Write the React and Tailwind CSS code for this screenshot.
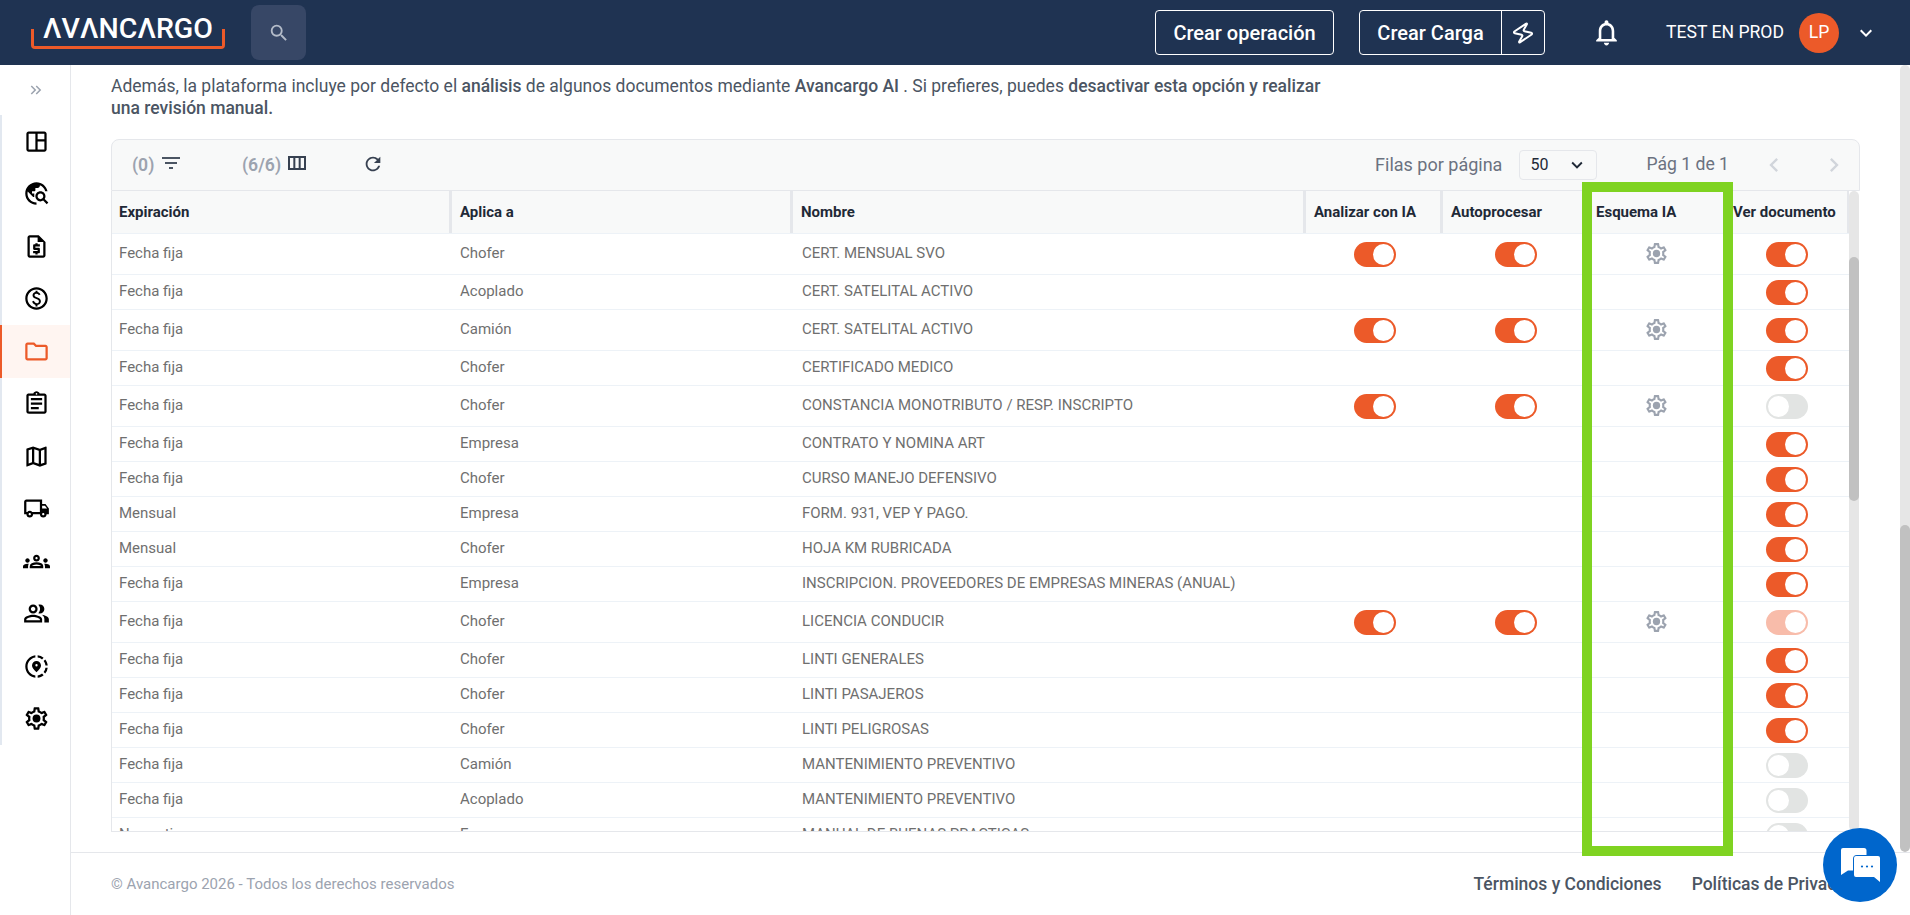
import {
  MdSearch,
  MdKeyboardArrowDown,
  MdOutlineNotifications,
  MdKeyboardDoubleArrowRight,
  MdOutlineSpaceDashboard,
  MdTravelExplore,
  MdOutlineRequestQuote,
  MdOutlinePaid,
  MdOutlineFolder,
  MdOutlineAssignment,
  MdOutlineMap,
  MdOutlineLocalShipping,
  MdOutlineGroups,
  MdOutlinePeopleAlt,
  MdOutlineShareLocation,
  MdFilterList,
  MdOutlineViewColumn,
  MdRefresh,
  MdChevronLeft,
  MdChevronRight,
} from "react-icons/md";
import { Zap } from "lucide-react";

const GEAR =
  "M19.43 12.98c.04-.32.07-.64.07-.98 0-.34-.03-.66-.07-.98l2.11-1.65c.19-.15.24-.42.12-.64l-2-3.46c-.09-.16-.26-.25-.44-.25-.06 0-.12.01-.17.03l-2.49 1c-.52-.4-1.08-.73-1.69-.98l-.38-2.65C14.46 2.18 14.25 2 14 2h-4c-.25 0-.46.18-.49.42l-.38 2.65c-.61.25-1.17.59-1.69.98l-2.49-1c-.06-.02-.12-.03-.18-.03-.17 0-.34.09-.43.25l-2 3.46c-.13.22-.07.49.12.64l2.11 1.65c-.04.32-.07.65-.07.98 0 .33.03.66.07.98l-2.11 1.65c-.19.15-.24.42-.12.64l2 3.46c.09.16.26.25.44.25.06 0 .12-.01.17-.03l2.49-1c.52.4 1.08.73 1.69.98l.38 2.65c.03.24.24.42.49.42h4c.25 0 .46-.18.49-.42l.38-2.65c.61-.25 1.17-.59 1.69-.98l2.49 1c.06.02.12.03.18.03.17 0 .34-.09.43-.25l2-3.46c.12-.22.07-.49-.12-.64l-2.11-1.65zm-1.98-1.71c.04.31.05.52.05.73 0 .21-.02.43-.05.73l-.14 1.13.89.7 1.08.84-.7 1.21-1.27-.51-1.04-.42-.9.68c-.43.32-.84.56-1.25.73l-1.06.43-.16 1.13-.2 1.35h-1.4l-.19-1.35-.16-1.13-1.06-.43c-.43-.18-.83-.41-1.23-.71l-.91-.7-1.06.43-1.27.51-.7-1.21 1.08-.84.89-.7-.14-1.13c-.03-.31-.05-.54-.05-.74s.02-.43.05-.73l.14-1.13-.89-.7-1.08-.84.7-1.21 1.27.51 1.04.42.9-.68c.43-.32.84-.56 1.25-.73l1.06-.43.16-1.13.2-1.35h1.39l.19 1.35.16 1.13 1.06.43c.43.18.83.41 1.23.71l.91.7 1.06-.43 1.27-.51.7 1.21-1.07.85-.89.7.14 1.13z";

function Gear({ size, className }) {
  return (
    <svg width={size} height={size} viewBox="0 0 24 24" fill="currentColor" className={className}>
      <path d={GEAR} />
      <circle cx="12" cy="12" r="3.5" />
    </svg>
  );
}

const navItems = [
  MdOutlineSpaceDashboard,
  MdTravelExplore,
  MdOutlineRequestQuote,
  MdOutlinePaid,
  MdOutlineFolder,
  MdOutlineAssignment,
  MdOutlineMap,
  MdOutlineLocalShipping,
  MdOutlineGroups,
  MdOutlinePeopleAlt,
  MdOutlineShareLocation,
];

// ai: fila con toggles de IA y engranaje; ver: on / off / dim
const rows = [
  { exp: "Fecha fija", to: "Chofer", name: "CERT. MENSUAL SVO", ai: true, ver: "on" },
  { exp: "Fecha fija", to: "Acoplado", name: "CERT. SATELITAL ACTIVO", ver: "on" },
  { exp: "Fecha fija", to: "Camión", name: "CERT. SATELITAL ACTIVO", ai: true, ver: "on" },
  { exp: "Fecha fija", to: "Chofer", name: "CERTIFICADO MEDICO", ver: "on" },
  { exp: "Fecha fija", to: "Chofer", name: "CONSTANCIA MONOTRIBUTO / RESP. INSCRIPTO", ai: true, ver: "off" },
  { exp: "Fecha fija", to: "Empresa", name: "CONTRATO Y NOMINA ART", ver: "on" },
  { exp: "Fecha fija", to: "Chofer", name: "CURSO MANEJO DEFENSIVO", ver: "on" },
  { exp: "Mensual", to: "Empresa", name: "FORM. 931, VEP Y PAGO.", ver: "on" },
  { exp: "Mensual", to: "Chofer", name: "HOJA KM RUBRICADA", ver: "on" },
  { exp: "Fecha fija", to: "Empresa", name: "INSCRIPCION. PROVEEDORES DE EMPRESAS MINERAS (ANUAL)", ver: "on" },
  { exp: "Fecha fija", to: "Chofer", name: "LICENCIA CONDUCIR", ai: true, ver: "dim" },
  { exp: "Fecha fija", to: "Chofer", name: "LINTI GENERALES", ver: "on" },
  { exp: "Fecha fija", to: "Chofer", name: "LINTI PASAJEROS", ver: "on" },
  { exp: "Fecha fija", to: "Chofer", name: "LINTI PELIGROSAS", ver: "on" },
  { exp: "Fecha fija", to: "Camión", name: "MANTENIMIENTO PREVENTIVO", ver: "off" },
  { exp: "Fecha fija", to: "Acoplado", name: "MANTENIMIENTO PREVENTIVO", ver: "off" },
  { exp: "Normativo", to: "Empresa", name: "MANUAL DE BUENAS PRACTICAS", ver: "off" },
];

const headers = ["Expiración", "Aplica a", "Nombre", "Analizar con IA", "Autoprocesar", "Esquema IA", "Ver documento"];
const gridCols = "grid grid-cols-[340px_341px_513px_137px_146px_137px_124px]";

function Toggle({ state = "on" }) {
  if (state === "off") {
    return (
      <span className="flex h-[25px] w-[42px] items-center justify-start rounded-full bg-[#e2e4e3] pl-[2px]">
        <span className="h-[21px] w-[21px] rounded-full bg-white" />
      </span>
    );
  }
  return (
    <span
      className={
        state === "dim"
          ? "flex h-[25px] w-[42px] items-center justify-end rounded-full bg-[#f8bcaa] pr-[2px]"
          : "flex h-[25px] w-[42px] items-center justify-end rounded-full bg-[#ec5a29] pr-[2px]"
      }
    >
      <span className="h-[21px] w-[21px] rounded-full bg-white" />
    </span>
  );
}

function Scrollbar({ className, top, thumb }) {
  return (
    <div className={`${className} flex flex-col overflow-hidden rounded-full bg-[#e6e6e6]`}>
      <div className={top} />
      <div className={thumb} />
    </div>
  );
}

function TopBar() {
  return (
    <header className="flex h-[65px] shrink-0 items-center bg-[#1f3352] text-white">
      <div className="ml-[31px] mt-[29px] flex h-[20px] w-[194px] items-center justify-center self-start rounded-b-[4px] border-x-[3px] border-b-[3px] border-[#ec5a29]">
        <span className="mt-[-17px] text-[28.5px] font-medium leading-none">ΛVΛNCΛRGO</span>
      </div>
      <button className="ml-[26px] flex h-[55px] w-[55px] items-center justify-center rounded-lg bg-[#374766] text-[#b4bcc9]">
        <MdSearch size={22} />
      </button>

      <div className="ml-auto flex items-center">
        <button className="flex h-[45px] w-[179px] items-center justify-center rounded border border-white text-[20px] font-medium">
          Crear operación
        </button>
        <div className="ml-[25px] flex h-[45px] w-[186px] items-stretch rounded border border-white">
          <span className="flex flex-1 items-center justify-center text-[20px] font-medium">Crear Carga</span>
          <span className="flex w-[43px] items-center justify-center border-l border-white">
            <Zap size={24} strokeWidth={2} className="rotate-[12deg]" />
          </span>
        </div>
        <MdOutlineNotifications size={31} className="ml-[46px]" />
        <span className="ml-[44px] text-[17.6px]">TEST EN PROD</span>
        <span className="ml-[15px] flex h-[40px] w-[40px] items-center justify-center rounded-full bg-[#ec5a29] text-[17.6px]">
          LP
        </span>
        <MdKeyboardArrowDown size={24} className="ml-[15px] mr-[32px]" />
      </div>
    </header>
  );
}

function Sidebar() {
  return (
    <aside className="flex w-[71px] shrink-0 flex-col border-r border-[#e5e7eb]">
      <div className="flex h-[50px] items-center justify-center pl-[1px] text-[#9ca3af]">
        <MdKeyboardDoubleArrowRight size={18} />
      </div>
      <nav className="border-l-2 border-[#e2e8f0]">
        {navItems.map((Icon, i) => (
          <div
            key={i}
            className={
              i === 4
                ? "ml-[-2px] flex h-[52.5px] items-center justify-center border-l-2 border-[#ec5a29] bg-[#fff5f1] text-[#ec5a29]"
                : "flex h-[52.5px] items-center justify-center text-black"
            }
          >
            <Icon size={27} />
          </div>
        ))}
        <div className="flex h-[52.5px] items-center justify-center text-black">
          <Gear size={27} />
        </div>
      </nav>
    </aside>
  );
}

function Toolbar() {
  return (
    <div className="flex h-[52px] shrink-0 items-center rounded-t-lg border border-[#e5e7eb] bg-[#f8f9f9] pr-[11px] text-[#6b7280]">
      <span className="ml-[20px] flex w-[110px] items-center text-[17.6px] font-semibold text-[#9ca3af]">
        (0)
        <MdFilterList size={24} className="ml-[5px] mt-[-3px] text-[#4b5563]" />
      </span>
      <span className="flex w-[120px] items-center text-[17.6px] font-semibold text-[#9ca3af]">
        (6/6)
        <MdOutlineViewColumn size={24} className="ml-[4px] mt-[-3px] text-[#374151]" />
      </span>
      <MdRefresh size={22} className="mt-[-3px] text-[#374151]" />

      <span className="ml-auto mt-[-2px] text-[18px]">Filas por página</span>
      <span className="ml-[17px] flex h-[30px] w-[78px] items-center justify-between rounded border border-[#e5e7eb] pl-[10px] pr-[8px] text-[16px] text-[#1f2937]">
        50
        <MdKeyboardArrowDown size={22} />
      </span>
      <span className="ml-[49px] mt-[-2px] text-[17.6px]">Pág 1 de 1</span>
      <MdChevronLeft size={28} className="ml-[31px] text-[#d1d5db]" />
      <MdChevronRight size={28} className="ml-[32px] text-[#d1d5db]" />
    </div>
  );
}

function Table() {
  return (
    <div className="flex h-[693px] flex-col">
      <Toolbar />
      <div className="flex min-h-0 flex-1 border-b border-[#e5e7eb]">
        <div className="w-[1738px] overflow-hidden border-l border-[#e5e7eb]">
          <div className={`${gridCols} h-[43px] items-center border-b border-[#edf2f7] bg-[#f8f9f9] text-[15px] font-bold text-[#1f2937]`}>
            {headers.map((h, i) => (
              <div
                key={h}
                className={
                  i === 0 || i > 4
                    ? "flex h-full items-center border-r-[3px] border-[#e5e7eb] pl-[7px]"
                    : "flex h-full items-center border-r-[3px] border-[#e5e7eb] pl-[8px]"
                }
              >
                {h}
              </div>
            ))}
          </div>
          {rows.map((r, i) => (
            <div
              key={i}
              className={`${gridCols} ${r.ai ? "h-[41px]" : "h-[35px]"} shrink-0 items-center border-b border-[#edf2f7] text-[15px] text-[#6f6f6f]`}
            >
              <div className="pb-[2px] pl-[7px]">{r.exp}</div>
              <div className="pb-[2px] pl-[8px]">{r.to}</div>
              <div className="pb-[2px] pl-[9px]">{r.name}</div>
              <div className="flex justify-center">{r.ai && <Toggle />}</div>
              <div className="flex justify-center pr-[1px]">{r.ai && <Toggle />}</div>
              <div className="flex justify-center pb-[2px] pr-[2px] text-[#9ca3af]">{r.ai && <Gear size={25} />}</div>
              <div className="flex justify-center pr-[2px]">
                <Toggle state={r.ver} />
              </div>
            </div>
          ))}
        </div>
        <Scrollbar className="w-[10px]" top="h-[66px] shrink-0" thumb="h-[244px] shrink-0 rounded-full bg-[#c1c1c1]" />
      </div>
    </div>
  );
}

export default function App() {
  return (
    <div className="relative flex h-screen flex-col overflow-hidden bg-white [font-family:Roboto,sans-serif]">
      <TopBar />
      <div className="flex min-h-0 flex-1">
        <Sidebar />
        <main className="flex min-w-0 flex-1 flex-col">
          <div className="flex h-[787px] shrink-0">
            <div className="flex-1 overflow-hidden px-10 pt-[10px]">
              <p className="mb-[20px] max-w-[1230px] text-[17.5px] leading-[22px] text-[#4b5563]">
                Además, la plataforma incluye por defecto el <span className="font-medium">análisis</span> de
                algunos documentos mediante <span className="font-medium">Avancargo AI</span> . Si prefieres,
                puedes <span className="font-medium">desactivar esta opción y realizar una revisión manual.</span>
              </p>
              <Table />
            </div>
            <Scrollbar className="w-[10px]" top="h-[460px] shrink-0" thumb="flex-1 rounded-full bg-[#c1c1c1]" />
          </div>
          <footer className="flex flex-1 items-center border-t border-[#e5e7eb] pl-10">
            <span className="text-[15px] text-[#9ca3af]">© Avancargo 2026 - Todos los derechos reservados</span>
            <span className="ml-auto text-[17.5px] font-medium text-[#4b5563]">Términos y Condiciones</span>
            <span className="ml-[30px] mr-[40px] text-[17.5px] font-medium text-[#4b5563]">Políticas de Privacidad</span>
          </footer>
        </main>
      </div>

      {/* marca verde sobre la columna Esquema IA */}
      <div className="pointer-events-none absolute left-[1582px] top-[182px] h-[674px] w-[151px] border-[10px] border-[#7fd321]" />

      {/* burbuja de chat */}
      <button className="absolute left-[1823px] top-[828px] flex h-[74px] w-[74px] items-center justify-center rounded-full bg-[#0066cc]">
        <svg width="40" height="36" viewBox="0 0 40 36">
          <path d="M3 1h21a2.5 2.5 0 0 1 2.5 2.5V8H17a4 4 0 0 0-4 4v11.5H8L1 28V3a2 2 0 0 1 2-2z" fill="#fff" />
          <path d="M16 9h22a2 2 0 0 1 2 2v24l-6-5H16a2 2 0 0 1-2-2V11a2 2 0 0 1 2-2z" fill="#fff" />
          <circle cx="22" cy="19.5" r="1.1" fill="#0066cc" />
          <circle cx="27" cy="19.5" r="1.1" fill="#0066cc" />
          <circle cx="32" cy="19.5" r="1.1" fill="#0066cc" />
        </svg>
      </button>
    </div>
  );
}
